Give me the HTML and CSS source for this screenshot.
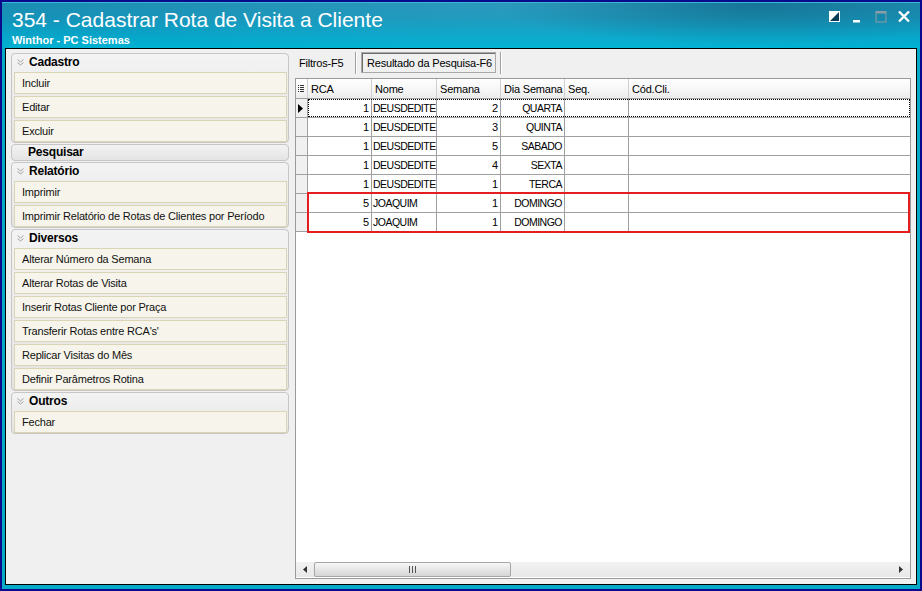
FILE: index.html
```html
<!DOCTYPE html>
<html lang="pt">
<head>
<meta charset="utf-8">
<title>354 - Cadastrar Rota de Visita a Cliente</title>
<link rel="stylesheet" href="styles.css">
</head>
<body>
<div class="window">
  <div class="titlebar">
    <div class="titlerow">
      <div class="titles">
        <div class="title">354 - Cadastrar Rota de Visita a Cliente</div>
        <div class="subtitle">Winthor - PC Sistemas</div>
      </div>
      <div class="controls">
        <svg class="ctl" width="12" height="12" viewBox="0 0 12 12"><rect x="0.5" y="0.5" width="10" height="10" fill="#0b3c56" stroke="#fff"/><polygon points="0,0 11,0 0,11" fill="#fff"/></svg>
        <svg class="ctl" width="12" height="12" viewBox="0 0 12 12"><rect x="1" y="9" width="7" height="2.5" fill="#fff"/></svg>
        <svg class="ctl" width="12" height="12" viewBox="0 0 12 12"><rect x="1" y="0.5" width="10" height="10.5" fill="none" stroke="#8b9ea6"/><rect x="1" y="0" width="10" height="2.5" fill="#8b9ea6"/></svg>
        <svg class="ctl" width="12" height="12" viewBox="0 0 12 12"><path d="M1 0.5 L11 10.5 M11 0.5 L1 10.5" stroke="#fff" stroke-width="2.4"/></svg>
      </div>
    </div>
    <div class="accent"></div>
  </div>

  <div class="content">
    <aside class="sidebar">
      <section class="group">
        <div class="ghdr"><svg class="chev" width="7" height="7" viewBox="0 0 7 7"><polyline points="0.5,0.5 3.5,3 6.5,0.5" fill="none" stroke="#a3a3a3"/><polyline points="0.5,3.5 3.5,6 6.5,3.5" fill="none" stroke="#a3a3a3"/></svg><span>Cadastro</span></div>
        <div class="items">
          <div class="item">Incluir</div>
          <div class="item">Editar</div>
          <div class="item">Excluir</div>
        </div>
      </section>
      <section class="group">
        <div class="ghdr plain"><span>Pesquisar</span></div>
      </section>
      <section class="group">
        <div class="ghdr"><svg class="chev" width="7" height="7" viewBox="0 0 7 7"><polyline points="0.5,0.5 3.5,3 6.5,0.5" fill="none" stroke="#a3a3a3"/><polyline points="0.5,3.5 3.5,6 6.5,3.5" fill="none" stroke="#a3a3a3"/></svg><span>Relatório</span></div>
        <div class="items">
          <div class="item">Imprimir</div>
          <div class="item">Imprimir Relatório de Rotas de Clientes por Período</div>
        </div>
      </section>
      <section class="group">
        <div class="ghdr"><svg class="chev" width="7" height="7" viewBox="0 0 7 7"><polyline points="0.5,0.5 3.5,3 6.5,0.5" fill="none" stroke="#a3a3a3"/><polyline points="0.5,3.5 3.5,6 6.5,3.5" fill="none" stroke="#a3a3a3"/></svg><span>Diversos</span></div>
        <div class="items">
          <div class="item">Alterar Número da Semana</div>
          <div class="item">Alterar Rotas de Visita</div>
          <div class="item">Inserir Rotas Cliente por Praça</div>
          <div class="item">Transferir Rotas entre RCA's'</div>
          <div class="item">Replicar Visitas do Mês</div>
          <div class="item">Definir Parâmetros Rotina</div>
        </div>
      </section>
      <section class="group">
        <div class="ghdr"><svg class="chev" width="7" height="7" viewBox="0 0 7 7"><polyline points="0.5,0.5 3.5,3 6.5,0.5" fill="none" stroke="#a3a3a3"/><polyline points="0.5,3.5 3.5,6 6.5,3.5" fill="none" stroke="#a3a3a3"/></svg><span>Outros</span></div>
        <div class="items">
          <div class="item">Fechar</div>
        </div>
      </section>
    </aside>

    <main class="pane">
      <div class="tabs">
        <div class="tab tab-plain">Filtros-F5</div>
        <div class="sep"></div>
        <div class="tab tab-active">Resultado da Pesquisa-F6</div>
        <div class="sep sep2"></div>
      </div>

      <div class="grid">
        <div class="ghead">
          <div class="c ind"><svg width="6" height="8" viewBox="0 0 6 8"><g fill="#333"><rect x="0" y="0" width="1" height="1"/><rect x="0" y="2" width="1" height="1"/><rect x="0" y="4" width="1" height="1"/><rect x="0" y="6" width="1" height="1"/><rect x="2" y="0" width="4" height="1"/><rect x="2" y="2" width="4" height="1"/><rect x="2" y="4" width="4" height="1"/><rect x="2" y="6" width="4" height="1"/></g></svg></div>
          <div class="cells">
            <div class="c w64">RCA</div>
            <div class="c w65">Nome</div>
            <div class="c w64">Semana</div>
            <div class="c w64">Dia Semana</div>
            <div class="c w64">Seq.</div>
            <div class="c last">Cód.Cli.</div>
          </div>
        </div>

        <div class="grow">
          <div class="c ind"><svg width="5" height="9" viewBox="0 0 5 9"><polygon points="0,0 5,4.5 0,9" fill="#000"/></svg></div>
          <div class="cells focus">
            <div class="c w64 r">1</div><div class="c w65 up">DEUSDEDITE</div><div class="c w64 r">2</div><div class="c w64 r up">QUARTA</div><div class="c w64"></div><div class="c last"></div>
          </div>
        </div>
        <div class="grow">
          <div class="c ind"></div>
          <div class="cells">
            <div class="c w64 r">1</div><div class="c w65 up">DEUSDEDITE</div><div class="c w64 r">3</div><div class="c w64 r up">QUINTA</div><div class="c w64"></div><div class="c last"></div>
          </div>
        </div>
        <div class="grow">
          <div class="c ind"></div>
          <div class="cells">
            <div class="c w64 r">1</div><div class="c w65 up">DEUSDEDITE</div><div class="c w64 r">5</div><div class="c w64 r up">SABADO</div><div class="c w64"></div><div class="c last"></div>
          </div>
        </div>
        <div class="grow">
          <div class="c ind"></div>
          <div class="cells">
            <div class="c w64 r">1</div><div class="c w65 up">DEUSDEDITE</div><div class="c w64 r">4</div><div class="c w64 r up">SEXTA</div><div class="c w64"></div><div class="c last"></div>
          </div>
        </div>
        <div class="grow">
          <div class="c ind"></div>
          <div class="cells">
            <div class="c w64 r">1</div><div class="c w65 up">DEUSDEDITE</div><div class="c w64 r">1</div><div class="c w64 r up">TERCA</div><div class="c w64"></div><div class="c last"></div>
          </div>
        </div>
        <div class="grow">
          <div class="c ind"></div>
          <div class="cells">
            <div class="c w64 r">5</div><div class="c w65 up">JOAQUIM</div><div class="c w64 r">1</div><div class="c w64 r up">DOMINGO</div><div class="c w64"></div><div class="c last"></div>
          </div>
        </div>
        <div class="grow">
          <div class="c ind"></div>
          <div class="cells">
            <div class="c w64 r">5</div><div class="c w65 up">JOAQUIM</div><div class="c w64 r">1</div><div class="c w64 r up">DOMINGO</div><div class="c w64"></div><div class="c last"></div>
          </div>
        </div>

        <div class="gempty"></div>

        <div class="hscroll">
          <div class="sbtn"><svg width="4" height="7" viewBox="0 0 4 7"><polygon points="4,0 0,3.5 4,7" fill="#333"/></svg></div>
          <div class="thumb"><svg width="7" height="7" viewBox="0 0 7 7"><g fill="#555"><rect x="0" y="0" width="1" height="7"/><rect x="3" y="0" width="1" height="7"/><rect x="6" y="0" width="1" height="7"/></g></svg></div>
          <div class="strack"></div>
          <div class="sbtn"><svg width="4" height="7" viewBox="0 0 4 7"><polygon points="0,0 4,3.5 0,7" fill="#333"/></svg></div>
        </div>

        <div class="highlight"></div>
      </div>
    </main>
  </div>
</div>
</body>
</html>
```

FILE: styles.css
```css
* { box-sizing: border-box; }
html, body { margin: 0; padding: 0; }
body {
  width: 922px;
  height: 591px;
  overflow: hidden;
  font-family: "Liberation Sans", Arial, sans-serif;
  font-size: 11px;
  color: #000;
  background: #0a0a8c;
}

.window {
  width: 922px;
  height: 591px;
  border: 2px solid #0a0a8c;
  background: #06a9c8;
  display: flex;
  flex-direction: column;
}

/* ---------- title bar ---------- */
.titlebar {
  height: 46px;
  flex: none;
  display: flex;
  flex-direction: column;
  border-top: 1px solid #38b8d6;
  background:
    radial-gradient(ellipse 260px 40px at 82% 5%, rgba(0, 70, 100, 0.4), rgba(0, 70, 100, 0) 100%),
    radial-gradient(ellipse 500px 60px at 60% -10%, rgba(120, 220, 240, 0.18), rgba(120, 220, 240, 0) 100%),
    linear-gradient(180deg, #1d8db2 0%, #1593b9 35%, #08a4c8 70%, #00b2d2 100%);
}
.titlerow {
  flex: 1;
  display: flex;
  justify-content: space-between;
}
.titles {
  padding: 5px 0 0 10px;
  color: #fff;
}
.title {
  font-size: 21px;
  line-height: 24px;
}
.subtitle {
  font-size: 11px;
  line-height: 13px;
  font-weight: bold;
  margin-top: 2px;
}
.controls {
  display: flex;
  gap: 11px;
  padding: 8px 10px 0 0;
}
.ctl { display: block; }
.accent {
  align-self: flex-end;
  width: 330px;
  height: 2px;
  margin-bottom: 1px;
  background: #f2a126;
}

/* ---------- content ---------- */
.content {
  flex: 1;
  margin: 0 3px 4px;
  border: 1px solid #000;
  background: #f0f0f0;
  display: flex;
  gap: 6px;
  padding: 3px 5px 5px 5px;
  min-height: 0;
}

/* ---------- sidebar ---------- */
.sidebar {
  width: 278px;
  flex: none;
  padding-top: 1px;
}
.group {
  border: 1px solid #c6c6c6;
  border-radius: 4px;
  background: linear-gradient(180deg, #f3f3f3 0%, #e4e4e4 100%);
  margin-bottom: 1px;
  padding: 0 1px 0 2px;
}
.ghdr {
  height: 18px;
  display: flex;
  align-items: center;
  padding: 0 0 2px 3px;
  font-weight: bold;
  font-size: 12px;
  letter-spacing: -0.2px;
  color: #000;
}
.ghdr .chev {
  display: block;
  margin-right: 5px;
  flex: none;
}
.ghdr.plain {
  height: 15px;
  padding: 0 0 1px 14px;
}
.items {
  display: flex;
  flex-direction: column;
  gap: 2px;
}
.item {
  height: 22px;
  border: 1px solid #d9d5b5;
  background: #f7f5eb;
  padding-left: 7px;
  display: flex;
  align-items: center;
  letter-spacing: -0.2px;
  white-space: nowrap;
  color: #111;
}

/* ---------- pane ---------- */
.pane {
  flex: 1;
  min-width: 0;
  display: flex;
  flex-direction: column;
}
.tabs {
  height: 21px;
  flex: none;
  display: flex;
  align-items: center;
}
.tab {
  height: 21px;
  display: flex;
  align-items: center;
  letter-spacing: -0.2px;
  white-space: nowrap;
}
.tab-plain {
  width: 60px;
  padding-left: 4px;
}
.tab-active {
  margin-left: 4px;
  width: 135px;
  padding-left: 5px;
  border: 1px solid #a8a8a8;
  box-shadow: inset 1px 1px 0 #6f6f6f;
  background: #f0f0f0;
}
.sep {
  width: 2px;
  height: 22px;
  border-left: 1px solid #a0a0a0;
  border-right: 1px solid #ffffff;
}
.sep2 { margin-left: 4px; }

/* ---------- grid ---------- */
.grid {
  flex: 1;
  margin-top: 5px;
  border: 1px solid #9a9a9a;
  background: #fff;
  position: relative;
  display: flex;
  flex-direction: column;
  min-height: 0;
}
.ghead, .grow {
  display: flex;
  flex: none;
  border-bottom: 1px solid #a0a0a0;
}
.ghead {
  height: 20px;
  background: linear-gradient(180deg, #ffffff 0%, #f7f7f7 50%, #ececec 100%);
}
.grow { height: 19px; }
.cells {
  flex: 1;
  display: flex;
  min-width: 0;
}
.c {
  height: 100%;
  border-right: 1px solid #a0a0a0;
  padding: 0 2px;
  overflow: hidden;
  white-space: nowrap;
  display: flex;
  align-items: center;
  flex: none;
}
.ghead .c {
  border-right-color: #cfcfcf;
  padding-left: 3px;
  letter-spacing: -0.2px;
}
.ind {
  width: 12px;
  padding: 0 0 0 2px;
  background: #f0f0f0;
}
.ghead .ind {
  background: transparent;
  padding-left: 2px;
  border-right-color: #cfcfcf;
}
.ind svg { display: block; }
.w64 { width: 64px; }
.w65 { width: 65px; }
.last {
  flex: 1;
  border-right: none;
}
.r { justify-content: flex-end; }
.up {
  font-size: 10.5px;
  letter-spacing: -0.5px;
  padding-left: 1px;
}
.focus {
  outline: 1px dotted #000;
  outline-offset: -1px;
}
.gempty { flex: 1; }

.hscroll {
  height: 15px;
  flex: none;
  margin-bottom: 1px;
  display: flex;
  background: linear-gradient(180deg, #f2f2f2 0%, #e8e8e8 100%);
}
.sbtn {
  width: 18px;
  flex: none;
  display: flex;
  align-items: center;
  justify-content: center;
}
.sbtn svg { display: block; }
.thumb {
  width: 197px;
  flex: none;
  border: 1px solid #a6a6a6;
  border-radius: 2px;
  background: linear-gradient(180deg, #f7f7f7 0%, #e6e6e6 50%, #d6d6d6 100%);
  display: flex;
  align-items: center;
  justify-content: center;
}
.thumb svg { display: block; }
.strack { flex: 1; }

.highlight {
  position: absolute;
  left: 11px;
  top: 113px;
  width: 603px;
  height: 41px;
  border: 2px solid #e41e1e;
  pointer-events: none;
}
```
